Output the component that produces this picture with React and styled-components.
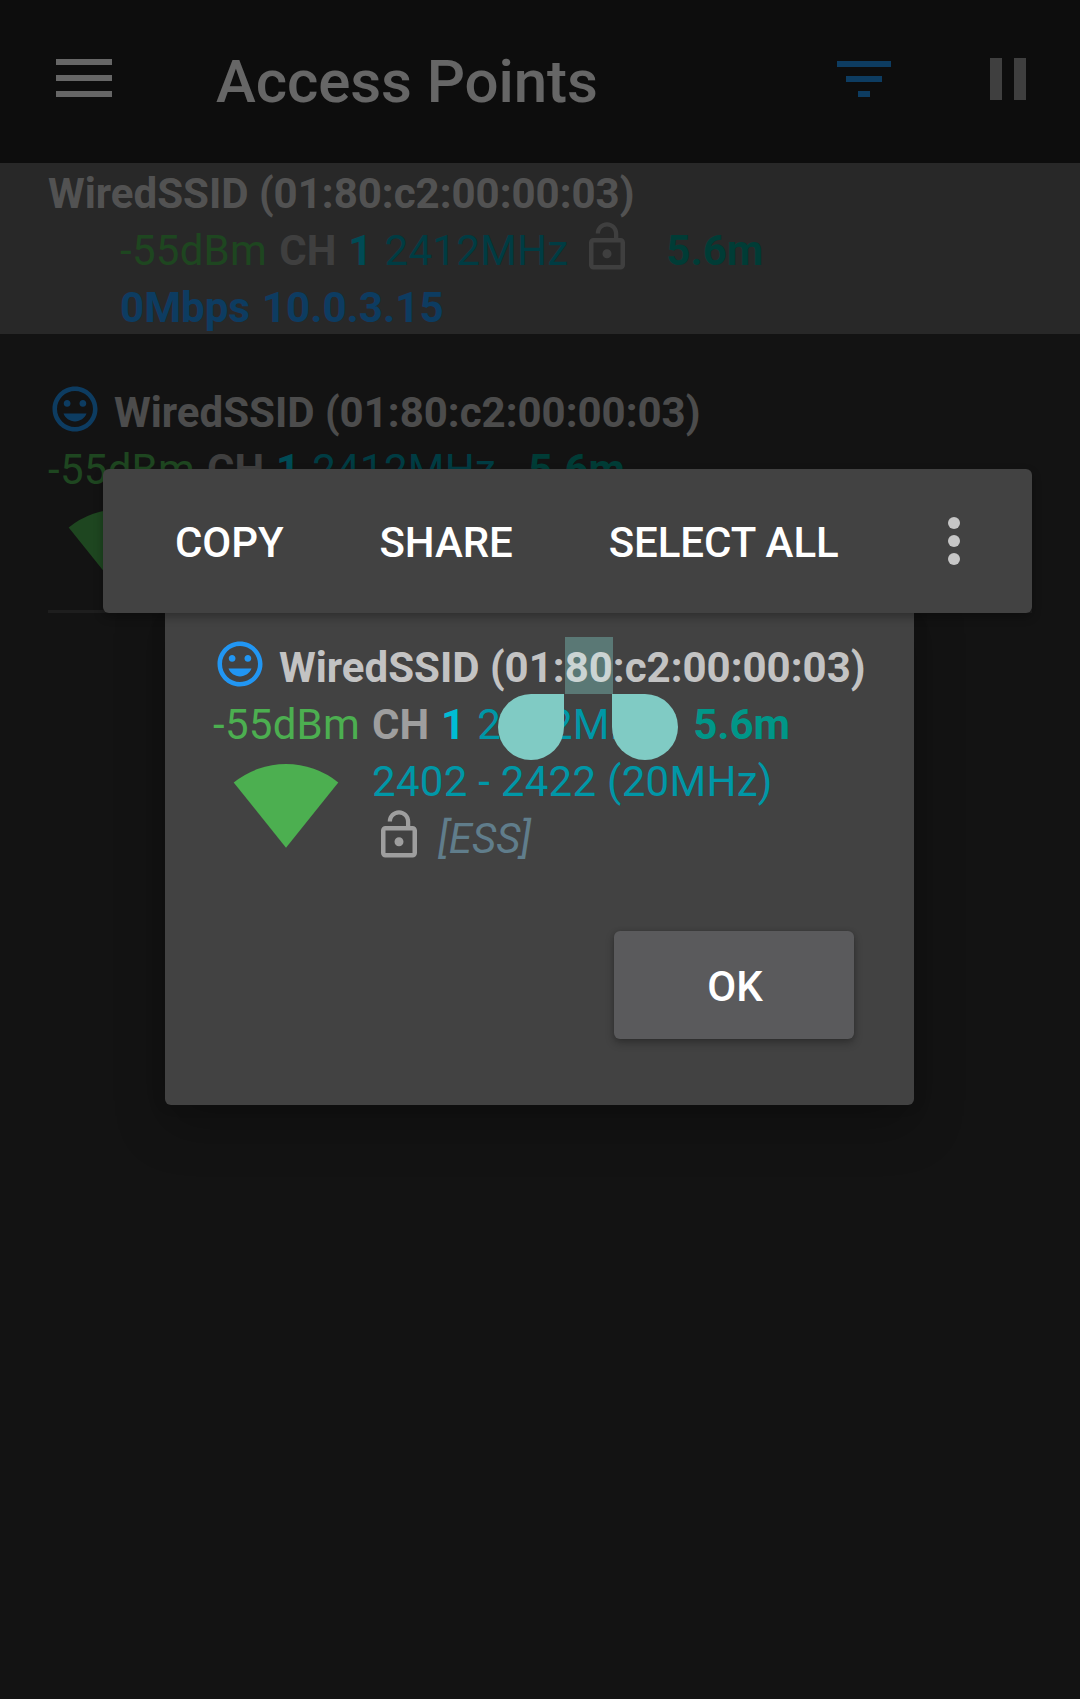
import React from "react";
import styled, { createGlobalStyle } from "styled-components";

const color = {
  blue: "#2196f3",
  green: "#4caf50",
  grey: "#9e9e9e",
  cyan: "#00bcd4",
  darkCyan: "#0097a7",
  teal: "#009688",
  slate: "#607d8b",
  primary: "rgba(255, 255, 255, 0.7)",
};

const GlobalStyle = createGlobalStyle`
  body {
    margin: 0;
    background: #303030;
    font-family: Roboto, "Noto Sans", sans-serif;
  }
  button {
    border: 0;
    padding: 0;
    background: none;
    font: inherit;
    color: inherit;
  }
`;

const Screen = styled.div`
  position: relative;
  width: 1080px;
  height: 1699px;
  overflow: hidden;
  background: #303030;
`;

const AppBar = styled.header`
  display: flex;
  align-items: center;
  box-sizing: border-box;
  height: 163px;
  padding: 0 54px 7px 56px;
  background: #212121;
`;

const Heading = styled.h1`
  flex: 1;
  margin: 0;
  padding: 7px 0 0 104px;
  font-size: 60px;
  font-weight: 500;
  line-height: 72px;
  letter-spacing: -0.08px;
  color: #fff;
`;

const BarButton = styled.button`
  display: flex;
  padding-top: ${(p) => p.$drop || 0}px;
  margin-left: ${(p) => p.$gap || 0}px;
`;

const Connection = styled.section`
  height: 171px;
  padding-left: 48px;
  background: #646464;
`;

const Indented = styled.div`
  padding-left: 72px;
`;

const List = styled.main`
  padding: 48px 48px 0;
`;

const ListItem = styled.article`
  height: 228px;
  border-bottom: 3px solid #4b4b4b;
`;

const Line = styled.div`
  display: flex;
  align-items: flex-start;
  height: 57px;
  white-space: pre;
`;

const Text = styled.span`
  padding-top: 4px;
  margin-left: ${(p) => p.$gap || 0}px;
  font-size: 42px;
  line-height: 53px;
  font-weight: ${(p) => (p.$bold ? 700 : 400)};
  font-style: ${(p) => (p.$italic ? "italic" : "normal")};
  letter-spacing: ${(p) => (p.$bold || p.$italic ? 0 : 0.28)}px;
  color: ${(p) => p.$color};
`;

const Rate = styled(Text)`
  letter-spacing: 0.06px;
  word-spacing: 1.4px;
`;

const Details = styled.div`
  display: grid;
  grid-template-columns: 159px 1fr;
`;

const Signal = styled.svg`
  display: block;
  margin: 13px 0 0 20px;
`;

const Glyph = styled.svg`
  flex: none;
  width: 54px;
  height: 54px;
  margin-left: ${(p) => p.$gap || 0}px;
  fill: ${(p) => p.$color};
`;

const Scrim = styled.div`
  position: absolute;
  inset: 0;
  background: rgba(0, 0, 0, 0.6);
`;

const Dialog = styled.div`
  position: absolute;
  left: 165px;
  top: 589px;
  box-sizing: border-box;
  width: 749px;
  height: 516px;
  padding: 48px 48px 0;
  display: flex;
  flex-direction: column;
  border-radius: 6px;
  background: #424242;
  box-shadow: 0 20px 50px rgba(0, 0, 0, 0.25), 0 0 16px rgba(0, 0, 0, 0.08);
`;

const OkButton = styled.button`
  align-self: flex-end;
  width: 240px;
  height: 108px;
  margin: 66px 12px 0 0;
  border-radius: 6px;
  background: #5a5a5c;
  box-shadow: 0 4px 8px rgba(0, 0, 0, 0.28), 0 0 4px rgba(0, 0, 0, 0.12);
  font-size: 42px;
  font-weight: 500;
  line-height: 50px;
  padding: 4px 0 0 2px;
  color: #fff;
`;

const Selection = styled.mark`
  position: relative;
  padding: 6px 0 2px;
  background: rgba(128, 203, 196, 0.4);
  color: inherit;
`;

const Handle = styled.i`
  position: absolute;
  top: 100%;
  width: 66px;
  height: 66px;
  background: #80cbc4;
  ${(p) =>
    p.$end
      ? "left: 100%; margin-left: -1px; border-radius: 0 33px 33px 33px;"
      : "right: 100%; margin-right: 1px; border-radius: 33px 0 33px 33px;"}
`;

const ActionBar = styled.div`
  position: absolute;
  left: 103px;
  top: 469px;
  box-sizing: border-box;
  width: 929px;
  height: 144px;
  padding: 0 72px 0 24px;
  display: flex;
  align-items: center;
  border-radius: 6px;
  background: #424242;
  box-shadow: 0 4px 10px rgba(0, 0, 0, 0.3);
`;

const Action = styled.button`
  padding: 4px 48px 0;
  font-size: 42px;
  font-weight: 500;
  line-height: 50px;
  letter-spacing: -0.08px;
  color: #fff;
`;

const Overflow = styled.button`
  display: flex;
  flex-direction: column;
  gap: 6px;
  margin-left: auto;
`;

const Dot = styled.span`
  width: 12px;
  height: 12px;
  border-radius: 50%;
  background: #c6c6c6;
`;

function LockOpen({ gap }) {
  return (
    <Glyph viewBox="0 0 24 24" $color={color.grey} $gap={gap}>
      <path d="M12 17c1.1 0 2-.9 2-2s-.9-2-2-2-2 .9-2 2 .9 2 2 2zm6-9h-1V6c0-2.76-2.24-5-5-5S7 3.24 7 6h1.9c0-1.71 1.39-3.1 3.1-3.1 1.71 0 3.1 1.39 3.1 3.1v2H6c-1.1 0-2 .9-2 2v10c0 1.1.9 2 2 2h12c1.1 0 2-.9 2-2V10c0-1.1-.9-2-2-2zm0 12H6V10h12v10z" />
    </Glyph>
  );
}

function Smiley() {
  return (
    <Glyph viewBox="0 0 24 24" $color={color.blue}>
      <path d="M11.99 2C6.47 2 2 6.48 2 12s4.47 10 9.99 10C17.52 22 22 17.52 22 12S17.52 2 11.99 2zM12 20c-4.42 0-8-3.58-8-8s3.58-8 8-8 8 3.58 8 8-3.58 8-8 8zm3.5-9c.83 0 1.5-.67 1.5-1.5S16.33 8 15.5 8 14 8.67 14 9.5s.67 1.5 1.5 1.5zm-7 0c.83 0 1.5-.67 1.5-1.5S9.33 8 8.5 8 7 8.67 7 9.5 7.67 11 8.5 11zm3.5 6.5c2.33 0 4.31-1.46 5.11-3.5H6.89c.8 2.04 2.78 3.5 5.11 3.5z" />
    </Glyph>
  );
}

function Channel({ gap }) {
  return (
    <>
      <Text $bold $gap={gap} $color={color.grey}>{"CH "}</Text>
      <Text $bold $gap={1.5} $color={color.cyan}>{"1 "}</Text>
      <Text $gap={1.7} $color={color.darkCyan}>2412MHz</Text>
    </>
  );
}

function AccessPoint({ children }) {
  return (
    <>
      <Line>
        <Smiley />
        <Text $bold $gap={12} $color={color.primary}>{children}</Text>
      </Line>
      <Details>
        <div>
          <Line>
            <Text $color={color.green}>-55dBm</Text>
          </Line>
          <Signal width="106" height="84" viewBox="0 0 106 84">
            <path d="M0.7 18.5A83.5 83.5 0 0 1 105.3 18.5L53 83.7Z" fill={color.green} />
          </Signal>
        </div>
        <div>
          <Line>
            <Channel />
            <Text $bold $gap={32} $color={color.teal}>5.6m</Text>
          </Line>
          <Line>
            <Text $color={color.darkCyan}>2402 - 2422 (20MHz)</Text>
          </Line>
          <Line>
            <LockOpen />
            <Text $italic $gap={12} $color={color.slate}>[ESS]</Text>
          </Line>
        </div>
      </Details>
    </>
  );
}

export default function App() {
  return (
    <>
      <GlobalStyle />
      <Screen>
        <AppBar>
          <BarButton aria-label="Menu">
            <svg width="56" height="38" fill="#fff">
              <path d="M0 0h56v6H0zM0 16h56v6H0zM0 32h56v6H0z" />
            </svg>
          </BarButton>
          <Heading>Access Points</Heading>
          <BarButton aria-label="Filter" $drop={2}>
            <svg width="54" height="36" fill={color.blue}>
              <path d="M0 0h54v6H0zM9 15h36v6H9zM21 30h12v6H21z" />
            </svg>
          </BarButton>
          <BarButton aria-label="Pause" $gap={99} $drop={2}>
            <svg width="36" height="42" fill={color.grey}>
              <path d="M0 0h12v42H0zM24 0h12v42H24z" />
            </svg>
          </BarButton>
        </AppBar>
        <Connection>
          <Line>
            <Text $bold $color={color.primary}>WiredSSID (01:80:c2:00:00:03)</Text>
          </Line>
          <Indented>
            <Line>
              <Text $color={color.green}>{"-55dBm "}</Text>
              <Channel gap={1.3} />
              <LockOpen gap={12} />
              <Text $bold $gap={32} $color={color.teal}>5.6m</Text>
            </Line>
            <Line>
              <Rate $bold $color={color.blue}>0Mbps 10.0.3.15</Rate>
            </Line>
          </Indented>
        </Connection>
        <List>
          <ListItem>
            <AccessPoint>WiredSSID (01:80:c2:00:00:03)</AccessPoint>
          </ListItem>
        </List>
        <Scrim />
        <Dialog>
          <div>
            <AccessPoint>
              WiredSSID (01:
              <Selection>
                80
                <Handle />
                <Handle $end />
              </Selection>
              :c2:00:00:03)
            </AccessPoint>
          </div>
          <OkButton>OK</OkButton>
        </Dialog>
        <ActionBar>
          <Action>COPY</Action>
          <Action>SHARE</Action>
          <Action>SELECT ALL</Action>
          <Overflow aria-label="More options">
            <Dot />
            <Dot />
            <Dot />
          </Overflow>
        </ActionBar>
      </Screen>
    </>
  );
}
